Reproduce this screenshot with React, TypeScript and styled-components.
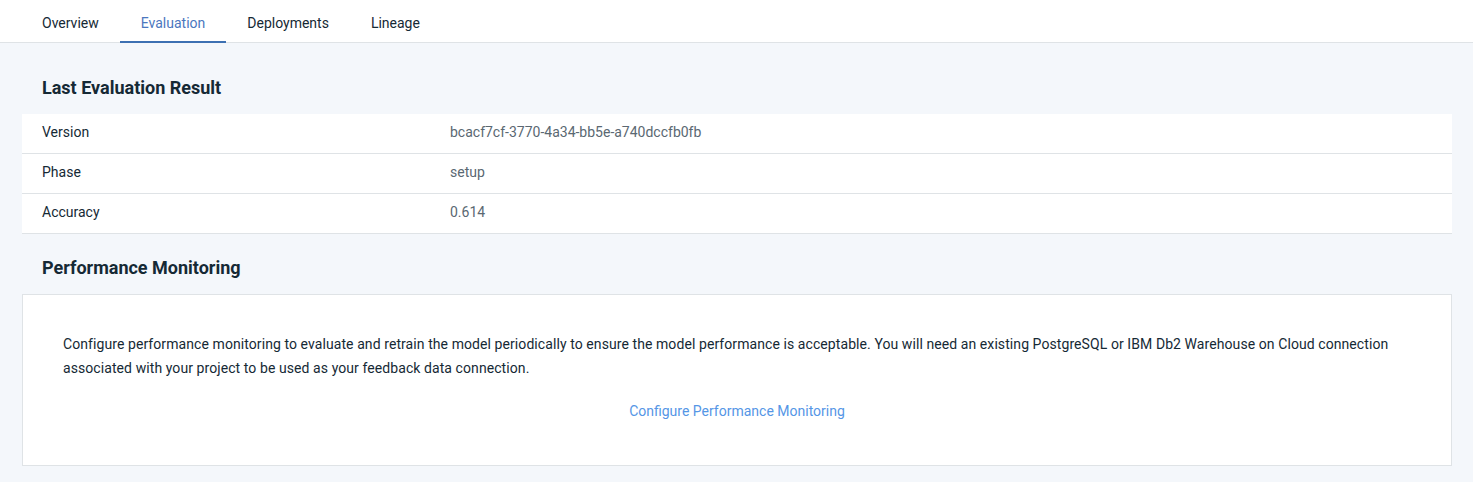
import styled, { createGlobalStyle } from "styled-components";

const GlobalStyle = createGlobalStyle`
  html, body {
    margin: 0;
    padding: 0;
    background: #f4f7fb;
    font-family: Roboto, "Liberation Sans", sans-serif;
    color: #152935;
  }
`;

const Page = styled.div`
  width: 1473px;
  min-height: 482px;
  background: #f4f7fb;
`;

const TabBar = styled.nav`
  display: flex;
  height: 43px;
  padding-left: 21px;
  background: #ffffff;
  border-bottom: 1px solid #dfe3e6;
  box-sizing: border-box;
`;

const Tab = styled.div<{ active?: boolean }>`
  display: flex;
  align-items: center;
  padding: 4px 21px 0;
  font-size: 14px;
  color: ${(p) => (p.active ? "#4b77be" : "#152935")};
  border-bottom: 2px solid ${(p) => (p.active ? "#3d70b2" : "transparent")};
  margin-bottom: -1px;
  cursor: pointer;
`;

const Content = styled.div`
  padding: 1px 21px 0 22px;
`;

const Heading = styled.h2<{ top: number }>`
  margin: 0 0 14px;
  padding: ${(p) => p.top}px 20px 0;
  line-height: 24px;
  font-size: 18px;
  font-weight: 700;
  color: #152935;
`;

const Table = styled.div`
  background: #ffffff;
`;

const Row = styled.div`
  display: grid;
  grid-template-columns: 408px 1fr;
  height: 40px;
  align-items: center;
  padding: 0 0 3px 20px;
  border-bottom: 1px solid #dfe3e6;
  box-sizing: border-box;
  font-size: 14px;
`;

const Label = styled.span`
  color: #152935;
`;

const Value = styled.span`
  color: #5a6872;
`;

const Card = styled.div`
  background: #ffffff;
  border: 1px solid #dfe3e6;
  padding: 37px 40px 0;
  box-sizing: border-box;
  height: 172px;
  display: flex;
  flex-direction: column;
  align-items: center;
`;

const Paragraph = styled.p`
  margin: 0;
  align-self: stretch;
  font-size: 14px;
  line-height: 24px;
  letter-spacing: 0.08px;
  color: #152935;
`;

const Link = styled.a`
  margin-top: 19px;
  font-size: 14px;
  line-height: 24px;
  color: #5596e6;
  text-decoration: none;
  cursor: pointer;
`;

const tabs = ["Overview", "Evaluation", "Deployments", "Lineage"];

const rows = [
  { label: "Version", value: "bcacf7cf-3770-4a34-bb5e-a740dccfb0fb" },
  { label: "Phase", value: "setup" },
  { label: "Accuracy", value: "0.614" },
];

export default function App() {
  return (
    <Page>
      <GlobalStyle />
      <TabBar>
        {tabs.map((t) => (
          <Tab key={t} active={t === "Evaluation"}>
            {t}
          </Tab>
        ))}
      </TabBar>
      <Content>
        <Heading top={32}>Last Evaluation Result</Heading>
        <Table>
          {rows.map((r) => (
            <Row key={r.label}>
              <Label>{r.label}</Label>
              <Value>{r.value}</Value>
            </Row>
          ))}
        </Table>
        <Heading top={22}>Performance Monitoring</Heading>
        <Card>
          <Paragraph>
            Configure performance monitoring to evaluate and retrain the model
            periodically to ensure the model performance is acceptable. You will
            need an existing PostgreSQL or IBM Db2 Warehouse on Cloud connection
            associated with your project to be used as your feedback data
            connection.
          </Paragraph>
          <Link>Configure Performance Monitoring</Link>
        </Card>
      </Content>
    </Page>
  );
}
